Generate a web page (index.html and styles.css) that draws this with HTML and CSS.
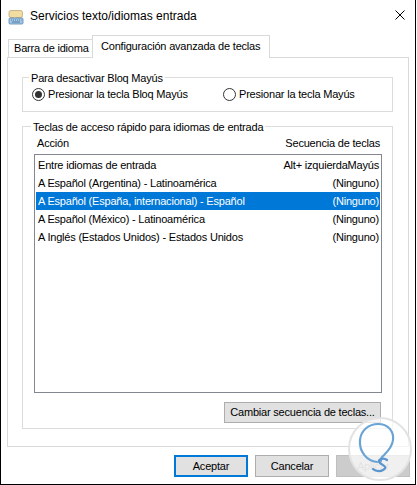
FILE: index.html
```html
<!DOCTYPE html>
<html lang="es">
<head>
<meta charset="utf-8">
<title>Servicios texto/idiomas entrada</title>
<link rel="stylesheet" href="styles.css">
</head>
<body>
<div class="window">
  <div class="titlebar">
    <svg class="app-icon" width="16" height="16" viewBox="0 0 16 16">
      <path d="M3 1.5h9.5a2 2 0 0 1 2 2v3a2 2 0 0 1-2 2H8l-2.5 2v-2H3a2 2 0 0 1-2-2v-3a2 2 0 0 1 2-2z" fill="#f3dca0" stroke="#b9a777" stroke-width="0.8"/>
      <rect x="1" y="9" width="14" height="6" rx="1" fill="#9ec7ea" stroke="#5f87ad" stroke-width="0.8"/>
      <path d="M3 11h1M5 11h1M7 11h1M9 11h1M11 11h1M13 11h0.5M4 13h8" stroke="#4f6f91" stroke-width="0.9"/>
    </svg>
    <span class="title">Servicios texto/idiomas entrada</span>
    <svg class="close" width="10" height="10" viewBox="0 0 10 10">
      <path d="M0.5 0.5L9.5 9.5M9.5 0.5L0.5 9.5" stroke="#000" stroke-width="1"/>
    </svg>
  </div>

  <div class="tabs">
    <div class="tab">Barra de idioma</div>
    <div class="tab active">Configuración avanzada de teclas</div>
  </div>

  <div class="panel">
    <div class="group group-caps">
      <div class="legend">Para desactivar Bloq Mayús</div>
      <div class="radios">
        <label class="radio first"><span class="dot checked"></span>Presionar la tecla Bloq Mayús</label>
        <label class="radio"><span class="dot"></span>Presionar la tecla Mayús</label>
      </div>
    </div>

    <div class="group group-keys">
      <div class="legend">Teclas de acceso rápido para idiomas de entrada</div>
      <div class="headers">
        <span>Acción</span>
        <span>Secuencia de teclas</span>
      </div>
      <div class="list">
        <div class="row"><span>Entre idiomas de entrada</span><span>Alt+ izquierdaMayús</span></div>
        <div class="row"><span>A Español (Argentina) - Latinoamérica</span><span>(Ninguno)</span></div>
        <div class="row selected"><span>A Español (España, internacional) - Español</span><span>(Ninguno)</span></div>
        <div class="row"><span>A Español (México) - Latinoamérica</span><span>(Ninguno)</span></div>
        <div class="row"><span>A Inglés (Estados Unidos) - Estados Unidos</span><span>(Ninguno)</span></div>
      </div>
      <div class="change-row">
        <button class="btn change">Cambiar secuencia de teclas...</button>
      </div>
    </div>
  </div>

  <div class="footer">
    <button class="btn default">Aceptar</button>
    <button class="btn">Cancelar</button>
    <button class="btn disabled">Aplicar</button>
  </div>

  <svg class="watermark" width="66" height="66" viewBox="0 0 66 66">
    <circle cx="33" cy="33" r="31" fill="rgba(255,255,255,0.7)" stroke="#e3e3e3" stroke-width="2"/>
    <path d="M30 46 C20 45 12 36 13 24 C14 14 22 8 31 8 C41 8 47 15 46 24 C45 32 40 36 36 40 C34 42 33 43 34 45" fill="none" stroke="#6aa3d6" stroke-width="2.2" stroke-linecap="round"/>
    <path d="M40 44 C36 41 29 44 33 47 C37 50 41 51 36 54 C33 56 28 55 26 53" fill="none" stroke="#5a95cf" stroke-width="2.2" stroke-linecap="round"/>
  </svg>
</div>
</body>
</html>
```

FILE: styles.css
```css
* { box-sizing: border-box; }

html, body {
  margin: 0;
  padding: 0;
  background: #fff;
}

body {
  font-family: "Liberation Sans", Arial, sans-serif;
  font-size: 11px;
  letter-spacing: -0.2px;
  color: #000;
}

.window {
  position: relative;
  width: 416px;
  height: 485px;
  border-left: 1px solid #000;
  border-right: 1px solid #000;
  border-bottom: 1px solid #000;
  background: #fff;
  overflow: hidden;
}

.titlebar {
  height: 35px;
  display: flex;
  align-items: flex-start;
  padding: 8px 0 0 7px;
}

.app-icon {
  flex: none;
  margin-top: 1px;
}

.title {
  font-size: 12px;
  letter-spacing: 0;
  line-height: 16px;
  margin-left: 6px;
  flex: 1;
}

.close {
  flex: none;
  margin: 2px 10px 0 0;
}

.tabs {
  height: 22px;
  display: flex;
  align-items: flex-end;
  padding-left: 7px;
}

.tab {
  width: 85px;
  height: 18px;
  line-height: 17px;
  padding-left: 5px;
  border: 1px solid #d9d9d9;
  border-bottom: none;
  background: #fff;
  white-space: nowrap;
}

.tab.active {
  width: 178px;
  height: 23px;
  line-height: 20px;
  margin-bottom: -1px;
  margin-left: -1px;
  padding-left: 8px;
  position: relative;
  z-index: 1;
}

.panel {
  width: 402px;
  height: 390px;
  margin-left: 6px;
  border: 1px solid #d9d9d9;
  padding: 19px 0 0 14px;
}

.group {
  width: 371px;
  border: 1px solid #dcdcdc;
}

.legend {
  display: block;
  width: max-content;
  height: 16px;
  line-height: 16px;
  margin: -8px 0 0 6px;
  padding: 0 2px;
  background: #fff;
}

.group-caps {
  height: 35px;
}

.radios {
  display: flex;
  height: 16px;
  margin-top: 0;
  padding-left: 9px;
}

.radio {
  display: flex;
  align-items: center;
  line-height: 16px;
  white-space: nowrap;
}

.radio.first {
  width: 191px;
}

.dot {
  flex: none;
  width: 13px;
  height: 13px;
  border: 1px solid #333;
  border-radius: 50%;
  margin-right: 3px;
  display: flex;
  align-items: center;
  justify-content: center;
  background: #fff;
}

.dot.checked::after {
  content: "";
  width: 7px;
  height: 7px;
  border-radius: 50%;
  background: #333;
}

.group-keys {
  height: 303px;
  margin-top: 14px;
  padding: 0 10px 0 11px;
}

.group-keys .legend {
  margin-left: -3px;
}

.headers {
  display: flex;
  justify-content: space-between;
  height: 16px;
  line-height: 16px;
  margin-top: 0;
  padding: 0 2px 0 3px;
}

.list {
  height: 239px;
  margin-top: 3px;
  border: 1px solid #828790;
  padding: 1px;
}

.row {
  display: flex;
  justify-content: space-between;
  height: 18px;
  line-height: 18px;
  padding: 0 1px 0 2px;
  white-space: nowrap;
}

.row.selected {
  background: #0078d7;
  color: #fff;
}

.change-row {
  display: flex;
  justify-content: flex-end;
  margin-top: 9px;
  padding-right: 1px;
}

.btn {
  font-family: "Liberation Sans", Arial, sans-serif;
  font-size: 11px;
  letter-spacing: -0.2px;
  color: #000;
  background: #e1e1e1;
  border: 1px solid #adadad;
  height: 21px;
  padding: 0;
  margin: 0;
  line-height: 19px;
  white-space: nowrap;
}

.btn.change {
  width: 157px;
}

.footer {
  display: flex;
  justify-content: flex-end;
  gap: 7px;
  margin-top: 8px;
  padding-right: 5px;
}

.footer .btn {
  width: 74px;
  height: 22px;
}

.btn.default {
  border: 2px solid #0078d7;
}

.btn.disabled {
  background: #cccccc;
  border-color: #bfbfbf;
  color: #a0a0a0;
}

.watermark {
  position: absolute;
  left: 346px;
  top: 416px;
  pointer-events: none;
}
```
